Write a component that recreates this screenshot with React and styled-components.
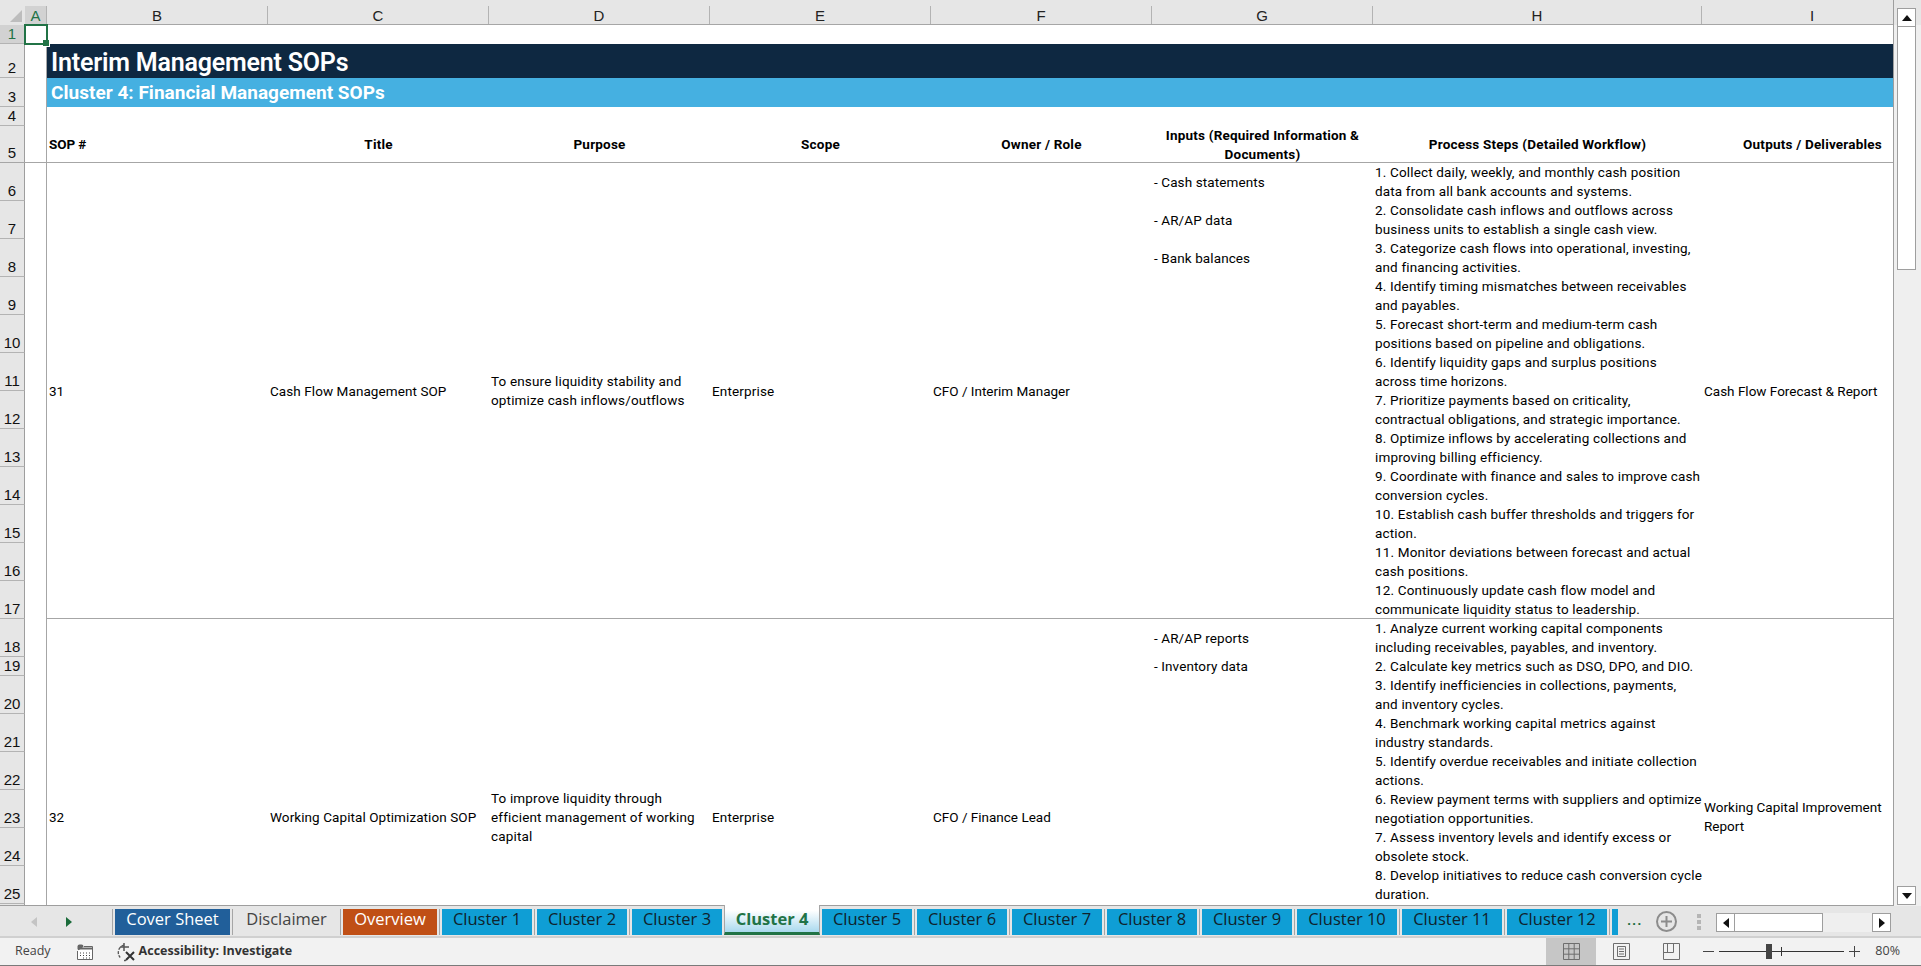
import React from "react";
import styled, { createGlobalStyle, css } from "styled-components";

const FONT = `Roboto, "Liberation Sans", sans-serif`;
const UI_FONT = `"Open Sans", "Liberation Sans", sans-serif`;
const HEAD_FONT = `"Liberation Sans Narrow", "Liberation Sans", sans-serif`;

const GlobalStyle = createGlobalStyle`
  html, body {
    margin: 0;
    padding: 0;
    width: 1921px;
    height: 966px;
    overflow: hidden;
    background: #fff;
  }
  * {
    box-sizing: border-box;
  }
`;

const COLUMNS = ["A", "B", "C", "D", "E", "F", "G", "H", "I"];
const ROW_HEIGHTS = [19, 34, 29, 19, 37, ...Array(12).fill(38), 38, 19, ...Array(6).fill(38), 38, 38, 35];

const SOPS = [
  {
    number: "31",
    from: 6,
    to: 17,
    title: "Cash Flow Management SOP",
    purpose: "To ensure liquidity stability and\noptimize cash inflows/outflows",
    scope: "Enterprise",
    owner: "CFO / Interim Manager",
    outputs: "Cash Flow Forecast & Report",
    inputs: ["- Cash statements", "- AR/AP data", "- Bank balances"],
    steps: [
      "1. Collect daily, weekly, and monthly cash position\ndata from all bank accounts and systems.",
      "2. Consolidate cash inflows and outflows across\nbusiness units to establish a single cash view.",
      "3. Categorize cash flows into operational, investing,\nand financing activities.",
      "4. Identify timing mismatches between receivables\nand payables.",
      "5. Forecast short-term and medium-term cash\npositions based on pipeline and obligations.",
      "6. Identify liquidity gaps and surplus positions\nacross time horizons.",
      "7. Prioritize payments based on criticality,\ncontractual obligations, and strategic importance.",
      "8. Optimize inflows by accelerating collections and\nimproving billing efficiency.",
      "9. Coordinate with finance and sales to improve cash\nconversion cycles.",
      "10. Establish cash buffer thresholds and triggers for\naction.",
      "11. Monitor deviations between forecast and actual\ncash positions.",
      "12. Continuously update cash flow model and\ncommunicate liquidity status to leadership.",
    ],
  },
  {
    number: "32",
    from: 18,
    to: 28,
    title: "Working Capital Optimization SOP",
    purpose: "To improve liquidity through\nefficient management of working\ncapital",
    scope: "Enterprise",
    owner: "CFO / Finance Lead",
    outputs: "Working Capital Improvement\nReport",
    inputs: ["- AR/AP reports", "- Inventory data"],
    steps: [
      "1. Analyze current working capital components\nincluding receivables, payables, and inventory.",
      "2. Calculate key metrics such as DSO, DPO, and DIO.",
      "3. Identify inefficiencies in collections, payments,\nand inventory cycles.",
      "4. Benchmark working capital metrics against\nindustry standards.",
      "5. Identify overdue receivables and initiate collection\nactions.",
      "6. Review payment terms with suppliers and optimize\nnegotiation opportunities.",
      "7. Assess inventory levels and identify excess or\nobsolete stock.",
      "8. Develop initiatives to reduce cash conversion cycle\nduration.",
    ],
  },
];

const HEADINGS = [
  { col: 3, text: "SOP #", align: "left" },
  { col: 4, text: "Title" },
  { col: 5, text: "Purpose" },
  { col: 6, text: "Scope" },
  { col: 7, text: "Owner / Role" },
  { col: 8, text: "Inputs (Required Information &\nDocuments)" },
  { col: 9, text: "Process Steps (Detailed Workflow)" },
  { col: 10, text: "Outputs / Deliverables" },
];

const TABS = [
  { name: "Cover Sheet", width: 115, fill: "#215f9a", color: "#fff" },
  { name: "Disclaimer", width: 103, fill: "transparent", color: "#444" },
  { name: "Overview", width: 94, fill: "#c04f15", color: "#fff" },
  { name: "Cluster 1", width: 90 },
  { name: "Cluster 2", width: 90 },
  { name: "Cluster 3", width: 90 },
  { name: "Cluster 4", width: 90, active: true },
  { name: "Cluster 5", width: 90 },
  { name: "Cluster 6", width: 90 },
  { name: "Cluster 7", width: 90 },
  { name: "Cluster 8", width: 90 },
  { name: "Cluster 9", width: 90 },
  { name: "Cluster 10", width: 100 },
  { name: "Cluster 11", width: 100 },
  { name: "Cluster 12", width: 100 },
  { name: "", width: 6 },
];

const Window = styled.div`
  width: 1921px;
  height: 966px;
  display: flex;
  flex-direction: column;
  overflow: hidden;
  background: #e6e6e6;
`;

const Workbook = styled.div`
  height: 906px;
  display: flex;
  flex: none;
`;

const Sheet = styled.div`
  width: 1894px;
  height: 906px;
  flex: none;
  overflow: hidden;
  display: grid;
  grid-template-columns: 25px 22px repeat(6, 221px) 329px 221px;
  grid-template-rows: 25px ${ROW_HEIGHTS.map((h) => `${h}px`).join(" ")};
  background: #fff;
  border-right: 1px solid #9e9e9e;
  border-bottom: 1px solid #9e9e9e;
  font-family: ${FONT};
  font-size: 13.5px;
  line-height: 19px;
  color: #000;
`;

const Corner = styled.div`
  grid-row: 1;
  grid-column: 1;
  background: #e6e6e6;
  position: relative;
  &::after {
    content: "";
    position: absolute;
    left: 10px;
    top: 10px;
    border-style: solid;
    border-width: 0 0 12px 12px;
    border-color: transparent transparent #bdbdbd transparent;
  }
`;

const ColumnHead = styled.div`
  grid-row: 1;
  grid-column: ${(p) => p.$col};
  background: ${(p) => (p.$selected ? "#d2d2d2" : "#e6e6e6")};
  box-shadow: 0 -6px 0 #e6e6e6;
  margin-top: 6px;
  border-right: 1px solid #b3b3b3;
  display: flex;
  align-items: center;
  justify-content: center;
  font-family: ${HEAD_FONT};
  font-size: 15px;
  color: ${(p) => (p.$selected ? "#217346" : "#222")};
`;

const RowHead = styled.div`
  grid-row: ${(p) => p.$row};
  grid-column: 1;
  background: ${(p) => (p.$selected ? "#d2d2d2" : "#e6e6e6")};
  border-bottom: 1px solid #b3b3b3;
  border-right: 1px solid #9e9e9e;
  display: flex;
  align-items: flex-end;
  justify-content: center;
  line-height: 19px;
  font-family: ${HEAD_FONT};
  font-size: 15px;
  color: ${(p) => (p.$selected ? "#217346" : "#111")};
`;

const GutterColumn = styled.div`
  grid-row: 2 / -1;
  grid-column: 2;
  border-right: 1px solid #a6a6a6;
`;

const TitleBar = styled.div`
  grid-row: 3;
  grid-column: 3 / -1;
  background: #0e2841;
  color: #fff;
  display: flex;
  align-items: center;
  padding: 2px 0 0 4px;
  font-size: 25px;
  font-weight: 600;
  letter-spacing: -0.2px;
`;

const SubtitleBar = styled.div`
  grid-row: 4;
  grid-column: 3 / -1;
  background: #45b0e1;
  color: #fff;
  display: flex;
  align-items: center;
  padding-left: 4px;
  font-size: 19px;
  font-weight: 700;
  letter-spacing: 0.02px;
`;

const Rule = styled.div`
  grid-row: ${(p) => p.$row};
  grid-column: ${(p) => (p.$full ? "1 / -1" : "3 / -1")};
  align-self: end;
  height: 1px;
  background: #a6a6a6;
`;

const Heading = styled.div`
  grid-row: 6;
  grid-column: ${(p) => p.$col};
  display: flex;
  align-items: center;
  justify-content: ${(p) => (p.$align === "left" ? "flex-start" : "center")};
  text-align: ${(p) => p.$align || "center"};
  white-space: pre;
  padding: 0 2px;
  font-weight: 700;
  letter-spacing: ${(p) => (p.$align === "left" ? "-0.1px" : "0.2px")};
`;

const Cell = styled.div`
  grid-row: ${(p) => p.$row};
  grid-column: ${(p) => p.$col};
  display: flex;
  align-items: center;
  padding: 0 2px;
  white-space: pre;
  min-width: 0;
  letter-spacing: ${(p) => p.$spacing || 0}px;
`;

const Selection = styled.div`
  grid-row: 2;
  grid-column: 2;
  margin: -1px;
  border: 2px solid #217346;
  position: relative;
  z-index: 2;
  &::after {
    content: "";
    position: absolute;
    right: -4px;
    bottom: -4px;
    width: 6px;
    height: 6px;
    background: #217346;
    border: 1px solid #fff;
    border-top-width: 0;
    border-left-width: 0;
  }
`;

const ScrollColumn = styled.div`
  flex: 1;
  display: flex;
  flex-direction: column;
  align-items: center;
  padding: 8px 5px 1px 3px;
  background: #efefef;
  box-shadow: inset 0 25px 0 #e6e6e6;
`;

const ScrollButton = styled.div`
  width: 19px;
  height: 19px;
  flex: none;
  background: #fff;
  border: 1px solid #9e9e9e;
  display: flex;
  align-items: center;
  justify-content: center;
`;

const ScrollThumb = styled.div`
  width: 19px;
  height: 243px;
  flex: none;
  background: #fff;
  border: 1px solid #9e9e9e;
  border-top: 0;
`;

const ScrollTrack = styled.div`
  flex: 1;
`;

const TabBar = styled.div`
  height: 32px;
  flex: none;
  display: flex;
  align-items: flex-start;
  background: #e6e6e6;
  border-bottom: 2px solid #d0d0d0;
  padding-top: 3px;
`;

const TabNav = styled.div`
  width: 115px;
  height: 26px;
  flex: none;
  display: flex;
  align-items: center;
  padding-left: 30px;
  gap: 27px;
`;

const TabList = styled.div`
  display: flex;
  align-items: flex-start;
  gap: 5px;
  flex: none;
`;

const Tab = styled.div`
  position: relative;
  width: ${(p) => p.$width}px;
  height: 26px;
  flex: none;
  display: flex;
  align-items: center;
  justify-content: center;
  padding-bottom: 7px;
  font-family: ${UI_FONT};
  font-size: 16.5px;
  background: ${(p) => p.$fill || "#0f9ed5"};
  color: ${(p) => p.$color || "#10222c"};
  &::before {
    content: "";
    position: absolute;
    left: -3px;
    top: 0;
    bottom: 0;
    width: 1px;
    background: #a6a6a6;
  }
  ${(p) =>
    p.$active &&
    css`
      width: 96px;
      height: 30px;
      margin: -4px -3px 0;
      padding-bottom: 1px;
      z-index: 2;
      background: linear-gradient(#fff 20%, #a9d9ee);
      border-left: 1px solid #a6a6a6;
      border-right: 1px solid #a6a6a6;
      border-bottom: 3px solid #217346;
      color: #217346;
      font-weight: 700;
      &::before {
        display: none;
      }
    `}
`;

const TabMore = styled.div`
  width: 38px;
  flex: none;
  padding-left: 9px;
  height: 24px;
  font-family: ${UI_FONT};
  font-size: 15px;
  font-weight: 600;
  letter-spacing: 1px;
  color: #1a6b3a;
`;

const AddSheet = styled.div`
  width: 21px;
  height: 21px;
  flex: none;
  margin: 2px 0 0 0;
  border: 2px solid #8c8c8c;
  border-radius: 50%;
  display: flex;
  align-items: center;
  justify-content: center;
  color: #8c8c8c;
`;

const SplitDots = styled.div`
  width: 4px;
  flex: none;
  height: 16px;
  margin: 5px 15px 0 20px;
  background: repeating-linear-gradient(#b5b5b5 0 4px, transparent 4px 6px);
`;

const HScroll = styled.div`
  width: 175px;
  height: 19px;
  flex: none;
  margin-top: 4px;
  display: flex;
  background: #efefef;
`;

const HButton = styled.div`
  width: 19px;
  height: 19px;
  flex: none;
  background: #fff;
  border: 1px solid #9e9e9e;
  display: flex;
  align-items: center;
  justify-content: center;
`;

const HThumb = styled.div`
  width: 88px;
  height: 19px;
  flex: none;
  background: #fff;
  border: 1px solid #9e9e9e;
  border-left: 0;
`;

const HTrack = styled.div`
  flex: 1;
`;

const StatusBar = styled.div`
  flex: 1;
  display: flex;
  align-items: center;
  background: #f2f2f2;
  border-bottom: 1px solid #7a7a7a;
  font-family: ${UI_FONT};
  font-size: 13px;
  color: #444;
`;

const StatusText = styled.span`
  margin: 0 0 2px ${(p) => p.$left || 0}px;
  font-weight: ${(p) => (p.$bold ? 700 : 400)};
  font-size: 12.5px;
  color: ${(p) => (p.$bold ? "#333" : "#444")};
  flex: none;
`;

const StatusIcon = styled.div`
  margin-left: ${(p) => p.$left || 0}px;
  display: flex;
  flex: none;
`;

const StatusSpacer = styled.div`
  flex: 1;
`;

const ViewButton = styled.div`
  width: 50px;
  height: 27px;
  flex: none;
  display: flex;
  align-items: center;
  justify-content: center;
  background: ${(p) => (p.$active ? "#c6c6c6" : "transparent")};
`;

const ZoomGroup = styled.div`
  margin-left: 7px;
  display: flex;
  align-items: center;
  flex: none;
`;

const ZoomSlider = styled.div`
  width: 125px;
  height: 17px;
  margin: 0 5px;
  flex: none;
  position: relative;
  &::before {
    content: "";
    position: absolute;
    left: 0;
    right: 0;
    top: 8px;
    height: 1px;
    background: #333;
  }
  &::after {
    content: "";
    position: absolute;
    left: 62px;
    top: 4px;
    width: 1px;
    height: 9px;
    background: #333;
  }
`;

const ZoomThumb = styled.div`
  position: absolute;
  left: 47px;
  top: 1px;
  width: 6px;
  height: 15px;
  background: #444;
`;

const ZoomPercent = styled.span`
  margin: 0 21px 2px 15px;
  flex: none;
  font-size: 12.5px;
  color: #444;
`;

function Triangle({ dir, color = "#111" }) {
  const points = {
    up: "0,7 5,1 10,7",
    down: "0,1 5,7 10,1",
    left: "7,0 1,5 7,10",
    right: "1,0 7,5 1,10",
  }[dir];
  const vertical = dir === "up" || dir === "down";
  return (
    <svg width={vertical ? 10 : 8} height={vertical ? 8 : 10} viewBox={vertical ? "0 0 10 8" : "0 0 8 10"}>
      <polygon points={points} fill={color} />
    </svg>
  );
}

function MacroIcon() {
  return (
    <svg width="16" height="16" viewBox="0 0 16 16">
      <rect x="0.5" y="0.5" width="6" height="6" rx="2" fill="#666" />
      <path d="M7 2.5h8.5v13H.5V7" fill="#fff" stroke="#666" />
      <path d="M1 4.5h15" stroke="#666" strokeWidth="2" />
      <path d="M3 9h1M6 9h1M9 9h1M12 9h1M3 11.5h1M6 11.5h1M9 11.5h1M12 11.5h1M6 14h1M9 14h1M12 14h1" stroke="#444" />
    </svg>
  );
}

function AccessibilityIcon() {
  return (
    <svg width="20" height="20" viewBox="0 0 20 20" fill="none" stroke="#555">
      <path d="M8 3.2A7.5 7.5 0 0 0 4.2 15.5" strokeWidth="1.3" strokeDasharray="3 1.2" />
      <path d="M8 18.5a7 7 0 0 0 2-.2" strokeWidth="1.3" />
      <path d="M8 1v8M4 5h9" strokeWidth="1.5" />
      <path d="M10 10l8 8M18 10l-8 8" strokeWidth="2" stroke="#333" />
    </svg>
  );
}

function NormalViewIcon() {
  return (
    <svg width="17" height="17" viewBox="0 0 17 17" fill="none" stroke="#6e6e6e">
      <path d="M.5.5h16v16H.5zM.5 5.8h16M.5 11.2h16M5.8.5v16M11.2.5v16" />
    </svg>
  );
}

function PageViewIcon() {
  return (
    <svg width="17" height="17" viewBox="0 0 17 17" fill="none" stroke="#6e6e6e">
      <path d="M.5.5h16v16H.5z" />
      <path d="M4.500 3.500h8v10h-8zM6 6h5M6 8.500h5M6 11h5" />
    </svg>
  );
}

function BreakViewIcon() {
  return (
    <svg width="17" height="17" viewBox="0 0 17 17" fill="none" stroke="#6e6e6e">
      <path d="M.5.5h16v16H.5zM.5 9.500h10M4.500.5v9M10.500.5v9" />
    </svg>
  );
}

function ZoomSign({ plus }) {
  return (
    <svg width="11" height="11" viewBox="0 0 11 11" stroke="#444">
      <path d="M0 5.500h11" />
      {plus && <path d="M5.500 0v11" />}
    </svg>
  );
}

function Sop({ sop }) {
  const rowOf = (n) => n + 1;
  const span = `${rowOf(sop.from)} / ${rowOf(sop.to) + 1}`;
  let stepRow = sop.from;
  return (
    <>
      <Cell $row={span} $col={3}>{sop.number}</Cell>
      <Cell $row={span} $col={4} $spacing={0.08}>{sop.title}</Cell>
      <Cell $row={span} $col={5} $spacing={0.16}>{sop.purpose}</Cell>
      <Cell $row={span} $col={6} $spacing={0.15}>{sop.scope}</Cell>
      <Cell $row={span} $col={7}>{sop.owner}</Cell>
      {sop.inputs.map((text, i) => (
        <Cell key={text} $row={rowOf(sop.from + i)} $col={8} $spacing={0.1}>{text}</Cell>
      ))}
      {sop.steps.map((text) => (
        <Cell key={text} $row={rowOf(stepRow++)} $col={9} $spacing={0.16}>{text}</Cell>
      ))}
      <Cell $row={span} $col={10}>{sop.outputs}</Cell>
    </>
  );
}

export default function App() {
  return (
    <>
      <GlobalStyle />
      <Window>
        <Workbook>
          <Sheet>
            <Corner />
            {COLUMNS.map((name, i) => (
              <ColumnHead key={name} $col={i + 2} $selected={name === "A"}>{name}</ColumnHead>
            ))}
            {ROW_HEIGHTS.map((_, i) => (
              <RowHead key={i} $row={i + 2} $selected={i === 0}>{i < 25 ? i + 1 : ""}</RowHead>
            ))}
            <GutterColumn />
            <TitleBar>Interim Management SOPs</TitleBar>
            <SubtitleBar>Cluster 4: Financial Management SOPs</SubtitleBar>
            {HEADINGS.map((h) => (
              <Heading key={h.col} $col={h.col} $align={h.align}>{h.text}</Heading>
            ))}
            {SOPS.map((sop) => (
              <Sop key={sop.number} sop={sop} />
            ))}
            <Rule $row={1} $full />
            <Rule $row={6} $full />
            <Rule $row={18} />
            <Selection />
          </Sheet>
          <ScrollColumn>
            <ScrollButton><Triangle dir="up" /></ScrollButton>
            <ScrollThumb />
            <ScrollTrack />
            <ScrollButton><Triangle dir="down" /></ScrollButton>
          </ScrollColumn>
        </Workbook>
        <TabBar>
          <TabNav>
            <Triangle dir="left" color="#c4c4c4" />
            <Triangle dir="right" color="#1a6b3a" />
          </TabNav>
          <TabList>
            {TABS.map((tab, i) => (
              <Tab key={i} $width={tab.width} $fill={tab.fill} $color={tab.color} $active={tab.active}>{tab.name}</Tab>
            ))}
          </TabList>
          <TabMore>...</TabMore>
          <AddSheet>
            <svg width="11" height="11" viewBox="0 0 11 11" stroke="currentColor" strokeWidth="2">
              <path d="M0 5.500h11M5.500 0v11" />
            </svg>
          </AddSheet>
          <SplitDots />
          <HScroll>
            <HButton><Triangle dir="left" /></HButton>
            <HThumb />
            <HTrack />
            <HButton><Triangle dir="right" /></HButton>
          </HScroll>
        </TabBar>
        <StatusBar>
          <StatusText $left={15}>Ready</StatusText>
          <StatusIcon $left={26}><MacroIcon /></StatusIcon>
          <StatusIcon $left={23}><AccessibilityIcon /></StatusIcon>
          <StatusText $left={3} $bold>Accessibility: Investigate</StatusText>
          <StatusSpacer />
          <ViewButton $active><NormalViewIcon /></ViewButton>
          <ViewButton><PageViewIcon /></ViewButton>
          <ViewButton><BreakViewIcon /></ViewButton>
          <ZoomGroup>
            <ZoomSign />
            <ZoomSlider><ZoomThumb /></ZoomSlider>
            <ZoomSign plus />
          </ZoomGroup>
          <ZoomPercent>80%</ZoomPercent>
        </StatusBar>
      </Window>
    </>
  );
}
